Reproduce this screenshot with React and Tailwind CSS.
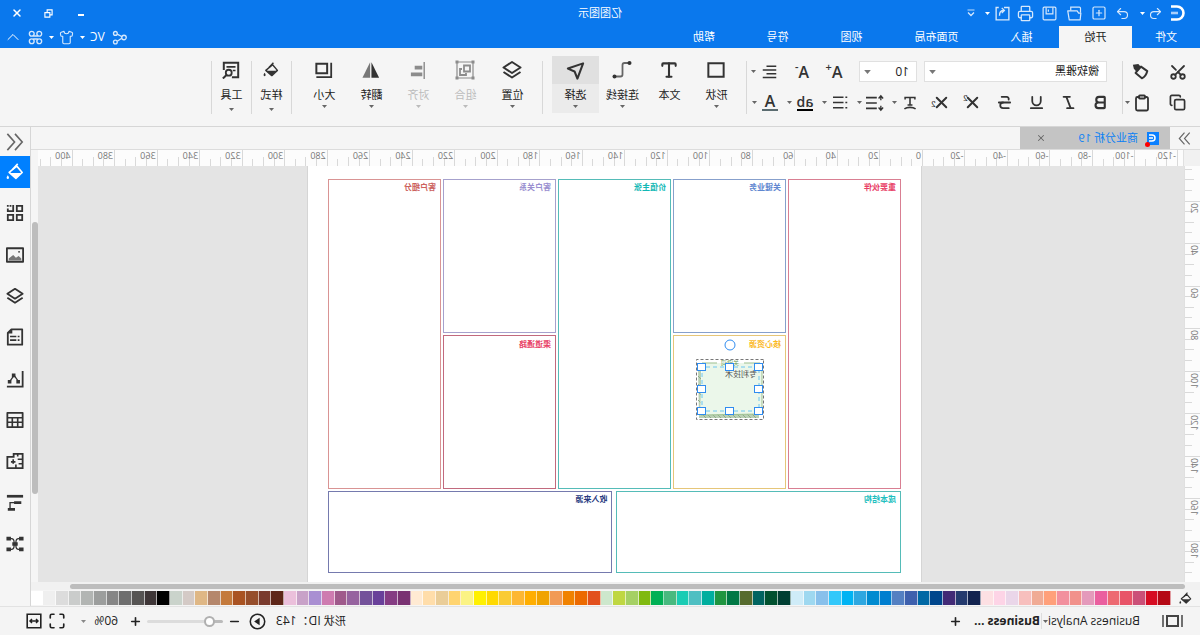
import React, { useState } from 'react';
import clsx from 'clsx';
import {
  Scissors, Copy, Clipboard, Bold, Italic, Underline, Strikethrough,
  Undo2, Redo2, SquarePlus, Printer, Shirt,
  X, Plus, Minus, ChevronUp, Maximize, Type,
} from 'lucide-react';

const PALETTE = [
  '#b50915', '#d60c22', '#cb5078', '#e85468', '#ed6a72', '#ea5f9f', '#e49abb', '#f1918b', '#f2909e', '#ffa07a',
  '#f0ab95', '#f7bfbd', '#ead6e9', '#fdd4e6', '#fde0e3', '#12234f', '#243a6e', '#422a76', '#00468c', '#0068a4',
  '#3e60ad', '#5480c2', '#007ecf', '#008bd0', '#2ea7e0', '#00b3f3', '#33c8fa', '#88c0eb', '#9ed8f0', '#cfecf8',
  '#003f33', '#00512f', '#006460', '#566b2e', '#007845', '#1f9540', '#00ae9e', '#4fbfc2', '#1accb4', '#48b97f',
  '#00b055', '#80b910', '#a5d064', '#bfd742', '#cde7cc', '#e2501d', '#ec6a00', '#f08200', '#f19a55', '#f0a300',
  '#ffae00', '#fdb733', '#facb34', '#ffd900', '#fff000', '#fbf384', '#ffd470', '#eacd98', '#ffddaa', '#ffead3',
  '#793272', '#853c83', '#69409a', '#74529a', '#96639f', '#9f5a8b', '#ce7bb0', '#a98fd2', '#c8a2c8', '#ebc0db',
  '#5e2618', '#7a3b2e', '#964e2b', '#a95322', '#c47a3c', '#b5876c', '#dfb785', '#d4cac6', '#cad3cb', '#000000',
  '#3e3637', '#565453', '#6e6e6e', '#868686', '#9c9e9d', '#b2b5b3', '#cacccb', '#dcdcdc', '#efefef', '#ffffff',
];

const H_LABELS = Array.from({ length: 27 }, (_, i) => -120 + i * 20);
const V_LABELS = Array.from({ length: 10 }, (_, i) => i * 20);

const Svg = ({ size = 20, className, children }) => (
  <svg
    width={size}
    height={size}
    viewBox="0 0 20 20"
    fill="none"
    stroke="currentColor"
    strokeWidth="1.8"
    className={clsx('shrink-0', className)}
    aria-hidden="true"
  >
    {children}
  </svg>
);

const Caret = ({ className }) => (
  <svg width="5" height="3" viewBox="0 0 5 3" className={clsx('shrink-0', className)} fill="currentColor" aria-hidden="true">
    <path d="M0 0h5L2.5 3z" />
  </svg>
);

const CaretButton = ({ label, className }) => (
  <button aria-label={label} className={clsx('flex h-5 w-2 items-center justify-center', className || 'text-[#666]')}>
    <Caret />
  </button>
);

const IconButton = ({ label, className, children }) => (
  <button aria-label={label} className={clsx('flex h-[21px] items-center justify-center', className)}>
    {children}
  </button>
);

const BucketIcon = ({ size, className }) => (
  <Svg size={size} className={className}>
    <path d="M8 3.5 2 10.5 9 17l7.5-6.5z" strokeLinejoin="round" />
    <path d="M3 11h13l-7 6z" fill="currentColor" stroke="none" />
    <path d="M7 1 12.5 7" />
    <path d="M18 13.5c1 1.6 1.3 2.2 1.3 2.9a1.3 1.3 0 0 1-2.6 0c0-.7.3-1.3 1.3-2.9z" fill="currentColor" stroke="none" />
  </Svg>
);

const LayersIcon = ({ size }) => (
  <Svg size={size}>
    <path d="M10 2 1.5 7.5 10 13l8.5-5.5z" strokeLinejoin="round" strokeWidth="2" />
    <path d="M1.500 12 10 17.500 18.500 12" strokeLinejoin="round" strokeWidth="2" />
  </Svg>
);

const DoubleChevron = ({ size, left }) => (
  <Svg size={size}>
    {left ? <path d="M10 1 2 10l8 9M18.500 1l-8 9 8 9" /> : <path d="M2 1l8 9-8 9M10 1l8 9-8 9" />}
  </Svg>
);

/* ---------- header ---------- */

const TABS = [
  { text: '开始', className: 'w-[73px]' },
  { text: '插入', className: 'w-[75px]' },
  { text: '页面布局', className: 'w-[95px]' },
  { text: '视图', className: 'w-[75px]' },
  { text: '符号', className: 'w-[73px]' },
  { text: '帮助', className: 'w-[74px]' },
];

const Header = () => {
  const [active, setActive] = useState('开始');

  return (
    <header className="flex h-12 shrink-0 flex-col bg-[#0a78ed] text-white">
      <div className="relative flex h-[26px] items-center justify-between">
        <div className="flex h-6 items-center">
          <svg width="15" height="16" viewBox="0 0 15 16" className="mr-[5px] ml-[15px]" fill="none" stroke="white" strokeWidth="2.600" aria-hidden="true">
            <path d="M14 1.500H8a6.500 6.500 0 0 0 0 13h6" />
            <path d="M7 8h7" stroke="#a9cffb" />
          </svg>
          <div className="flex items-center text-[#d6e8fc]">
            <IconButton label="撤销" className="w-[18px]"><Undo2 size={15} strokeWidth={1.8} /></IconButton>
            <CaretButton label="撤销列表" className="text-white" />
            <IconButton label="重做" className="ml-1 w-6"><Redo2 size={15} strokeWidth={1.8} /></IconButton>
            <IconButton label="新建" className="w-6"><SquarePlus size={16} strokeWidth={1.8} /></IconButton>
            <IconButton label="打开" className="w-[25px]">
              <Svg size={15}>
                <path d="M2.500 18.500h14.500l2-12H6.500l-2 3h-3z" strokeLinejoin="round" strokeWidth="1.600" />
                <path d="M2 9V3q0-1.500 1.500-1.500H15V6" strokeWidth="1.600" />
              </Svg>
            </IconButton>
            <IconButton label="保存" className="w-6">
              <Svg size={15}>
                <path d="M1.500 3q0-1.500 1.500-1.500h14q1.500 0 1.500 1.500v14q0 1.500-1.500 1.500H3q-1.500 0-1.500-1.500z" strokeWidth="1.600" />
                <path d="M5.500 2v8.500h9V2M11.500 4.500v3" strokeWidth="1.600" />
              </Svg>
            </IconButton>
            <IconButton label="打印" className="w-6"><Printer size={17} strokeWidth={1.8} /></IconButton>
            <IconButton label="导出" className="w-[22px]">
              <Svg size={15}>
                <path d="M8 2H1.500v16.500h17V2H15" />
                <path d="M14 13c0-5-1.500-7-6-7M11 2.500 7.500 6 11 9.500" />
              </Svg>
            </IconButton>
            <CaretButton label="导出选项" className="text-white" />
            <IconButton label="更多" className="ml-[5px] w-4">
              <Svg size={10}><path d="M3 4h14" /><path d="m4 9 6 6 6-6" strokeWidth="2.500" /></Svg>
            </IconButton>
          </div>
        </div>
        <h1 className="absolute left-1/2 -translate-x-1/2 text-[11px] leading-5">亿图图示</h1>
        <div className="flex h-[22px] items-center pr-[2px]">
          <IconButton label="最小化" className="w-[33px]"><span className="mt-1 h-[2px] w-[6px] bg-white" /></IconButton>
          <IconButton label="还原" className="w-[33px]">
            <Svg size={9}><path d="M2 2h11v11H2z" strokeWidth="2.500" /><path d="M7 8h11v10H7z" strokeWidth="2.500" fill="#0a78ed" /></Svg>
          </IconButton>
          <IconButton label="关闭" className="w-[30px]"><X size={12} strokeWidth={3} /></IconButton>
        </div>
      </div>

      <div className="flex h-[22px] items-end justify-between">
        <nav className="flex">
          <button className="h-[22px] w-[68px] text-[11px]">文件</button>
          {TABS.map(tab => (
            <button
              key={tab.text}
              onClick={() => setActive(tab.text)}
              className={clsx('h-[22px] text-[11px]', tab.className, active === tab.text && 'bg-[#f5f5f5] text-[#222]')}
            >
              {tab.text}
            </button>
          ))}
        </nav>
        <div className="flex h-[22px] items-center pr-[5px]">
          <IconButton label="分享" className="mr-[7px] w-4">
            <Svg size={15} className="text-[#d6e8fc]">
              <circle cx="4" cy="10" r="3" />
              <circle cx="15.500" cy="4.500" r="2.500" />
              <circle cx="15.500" cy="16" r="2.500" />
              <path d="m6.500 9 6.500-3.500M7 11l6 4" />
            </Svg>
          </IconButton>
          <button className="text-xs leading-5">VC</button>
          <CaretButton label="账户菜单" className="mr-1 ml-[3px] text-white" />
          <IconButton label="主题" className="w-4 text-[#d6e8fc]"><Shirt size={15} strokeWidth={1.8} /></IconButton>
          <CaretButton label="主题列表" className="mr-1 ml-[3px] text-white" />
          <IconButton label="应用" className="w-4">
            <Svg size={15} className="text-[#d6e8fc]">
              <circle cx="5" cy="5" r="3.200" />
              <circle cx="15" cy="5" r="3.200" />
              <circle cx="5" cy="15" r="3.200" />
              <circle cx="15" cy="15" r="3.200" />
              <path d="M7 8h6M7 12h6" />
            </Svg>
          </IconButton>
          <IconButton label="收起功能区" className="ml-[7px] w-4"><ChevronUp size={20} strokeWidth={1.200} className="shrink-0" /></IconButton>
        </div>
      </div>
    </header>
  );
};

/* ---------- ribbon ---------- */

const Divider = () => <div className="mt-[13px] h-[53px] w-px shrink-0 bg-[#d8d8d8]" />;

const BigButton = ({ text, icon, caret = true, active, disabled, lowCaret }) => (
  <button
    disabled={disabled}
    className={clsx(
      'mt-2 flex h-[57px] w-[47px] shrink-0 flex-col items-center text-[11px]',
      active && 'bg-[#ebebeb]',
      disabled ? 'text-[#bcbcbc]' : 'text-[#222]',
    )}
  >
    <span className={clsx('flex h-7 w-full items-center justify-center', active && 'bg-[#e0e0e0]', disabled ? 'text-[#8c8c8c]' : 'text-[#333]')}>
      {icon}
    </span>
    <span className="h-5 leading-[22px]">{text}</span>
    {caret && <Caret className={clsx(lowCaret ? 'mt-1' : 'mt-px', disabled ? 'text-[#bbb]' : 'text-[#666]')} />}
  </button>
);

const TextTool = ({ label, menu, children }) => (
  <div className="mr-[3px] flex items-center">
    <IconButton label={label} className="w-6">{children}</IconButton>
    <CaretButton label={menu} />
  </div>
);

const Ribbon = () => (
  <section className="flex h-[79px] shrink-0 overflow-hidden border-b border-[#d6d6d6] bg-[#f5f5f5] text-[#333]">
    <div className="flex w-[77px] shrink-0 flex-col gap-[10px] pt-[13px] pl-[11px]">
      <div className="flex gap-[15px]">
        <IconButton label="剪切" className="w-[22px]"><Scissors size={18} strokeWidth={2.400} className="-rotate-90" /></IconButton>
        <IconButton label="格式刷" className="w-[22px]">
          <Svg size={18}>
            <path d="m3 9 7-5 6 7-7 6c-3-1-5-4-6-8z" strokeLinejoin="round" strokeWidth="2.200" />
            <path d="M10 4.500 13 1l6 1-1 4-3 4z" fill="currentColor" stroke="none" />
          </Svg>
        </IconButton>
      </div>
      <div className="flex">
        <IconButton label="复制" className="mr-[15px] w-[22px]"><Copy size={17} strokeWidth={2.400} className="-scale-x-100" /></IconButton>
        <IconButton label="粘贴" className="w-[20px]"><Clipboard size={18} strokeWidth={2.400} /></IconButton>
        <CaretButton label="粘贴选项" />
      </div>
    </div>
    <Divider />

    <div className="flex w-[375px] shrink-0 flex-col gap-[10px] pt-[13px]">
      <div className="flex h-[21px] items-center pl-[15px]">
        <div className="relative mr-[7px]">
          <select aria-label="字体" className="block h-[21px] w-[183px] appearance-none border border-[#e0e0e0] bg-white pl-[7px] text-[11px] text-[#222]">
            <option>微软雅黑</option>
          </select>
          <Caret className="pointer-events-none absolute top-[9px] right-[5px] h-[4px] w-[7px] text-[#777]" />
        </div>
        <div className="relative mr-[9px]">
          <select aria-label="字号" defaultValue="10" className="block h-[21px] w-[58px] appearance-none border border-[#e0e0e0] bg-white pl-[7px] text-xs text-[#222]">
            <option>9</option>
            <option>10</option>
            <option>12</option>
          </select>
          <Caret className="pointer-events-none absolute top-[9px] right-[5px] h-[4px] w-[7px] text-[#777]" />
        </div>
        <IconButton label="增大字号" className="w-8 text-base font-semibold leading-5">A<sup className="text-[11px] leading-none">+</sup></IconButton>
        <IconButton label="减小字号" className="mr-1 w-8 text-base font-semibold leading-5">A<sup className="text-[11px] leading-none">-</sup></IconButton>
        <TextTool label="对齐方式" menu="对齐列表">
          <Svg size={15}><path d="M1 3h13M1 8h18M1 13h13M1 18h18" strokeWidth="2" /></Svg>
        </TextTool>
      </div>
      <div className="flex h-[21px] items-center pl-[6px]">
        <IconButton label="加粗" className="w-8"><Bold size={17} strokeWidth={3} /></IconButton>
        <IconButton label="斜体" className="w-8"><Italic size={17} strokeWidth={2.500} /></IconButton>
        <IconButton label="下划线" className="w-8"><Underline size={17} strokeWidth={2.500} /></IconButton>
        <IconButton label="删除线" className="w-8"><Strikethrough size={17} strokeWidth={2.500} /></IconButton>
        <IconButton label="上标" className="w-8">
          <X size={19} strokeWidth={2.500} className="-mr-[4px] shrink-0" /><sup className="font-serif text-[9px] leading-none">2</sup>
        </IconButton>
        <IconButton label="下标" className="mr-[3px] w-8">
          <X size={19} strokeWidth={2.500} className="-mr-[4px] shrink-0" /><sub className="font-serif text-[9px] leading-none">2</sub>
        </IconButton>
        <TextTool label="文字效果" menu="文字效果列表">
          <Svg size={14}><path d="M3 5V2h14v3M10 2v11M6.500 13h7M2 18.500c4-3 12-3 16 0" strokeWidth="2.200" /></Svg>
        </TextTool>
        <TextTool label="行距" menu="行距列表">
          <Svg size={18}>
            <path d="M8 4h12M8 10h12M8 16h12" />
            <path d="M3.500 2v5M3.500 13v5M1 5l2.500-3L6 5M1 15l2.500 3L6 15" strokeWidth="1.500" />
          </Svg>
        </TextTool>
        <TextTool label="项目符号" menu="项目符号列表">
          <Svg size={15}><path d="M6 3h14M6 10h14M6 17h14" strokeWidth="2" /><path d="M1 3h2.500M1 10h2.500M1 17h2.500" strokeWidth="2" /></Svg>
        </TextTool>
        <TextTool label="突出显示" menu="突出显示颜色">
          <span className="h-[17px] border-b-2 border-black text-[14px] leading-[15px] font-semibold">ab</span>
        </TextTool>
        <TextTool label="字体颜色" menu="字体颜色列表">
          <span className="h-[17px] w-4 border-b-2 border-[#5b6c70] text-center text-[16px] leading-[14px] font-semibold">A</span>
        </TextTool>
      </div>
    </div>
    <Divider />

    <div className="flex pr-[9px] pl-[6px]">
      <BigButton text="形状" icon={<Svg size={18}><path d="M1.500 2.500h17v15h-17z" strokeWidth="2.200" /></Svg>} />
      <BigButton text="文本" caret={false} icon={<Type size={20} strokeWidth={2.500} />} />
      <BigButton
        text="连接线"
        icon={
          <Svg size={20}>
            <path d="M3 3h4.500q2 0 2 2v9.500q0 2 2 2H17" stroke="#666" />
            <circle cx="2.500" cy="3" r="2" fill="currentColor" stroke="none" />
            <circle cx="17.500" cy="16.500" r="2" fill="currentColor" stroke="none" />
          </Svg>
        }
      />
      <BigButton text="选择" active icon={<Svg size={19}><path d="M2 2.500 18 8l-7 3-3 7.500z" strokeWidth="2.200" strokeLinejoin="round" /></Svg>} />
    </div>
    <Divider />

    <div className="flex pr-[9px] pl-[6px]">
      <BigButton text="位置" icon={<LayersIcon size={20} />} />
      <BigButton
        text="组合"
        disabled
        icon={
          <Svg size={20}>
            <path d="M2 2h16v16H2z" strokeWidth="1.200" />
            <path d="M5 5.500h6v6H5zM13 9h2v6H9v-2" strokeWidth="1.800" />
            <path d="M.5.5h3v3h-3zM16.500.5h3v3h-3zM.5 16.500h3v3h-3zM16.500 16.500h3v3h-3z" fill="currentColor" stroke="none" />
          </Svg>
        }
      />
      <BigButton
        text="对齐"
        disabled
        icon={<Svg size={19}><path d="M4 1v18" strokeWidth="1.500" /><path d="M6 7h8M6 14h12" strokeWidth="4" /></Svg>}
      />
      <BigButton
        text="翻转"
        icon={
          <Svg size={18}>
            <path d="M9.500 1.500V18.500H1z" fill="currentColor" stroke="none" />
            <path d="M11 1.500V18.500H19.500z" fill="#777" stroke="none" />
          </Svg>
        }
      />
      <BigButton text="大小" icon={<Svg size={18}><path d="M6.500 3h12v10.500h-12z" strokeWidth="2.200" /><path d="M2 2v16h16.500" strokeWidth="2" /></Svg>} />
    </div>
    <Divider />
    <div className="flex w-[39px] justify-center">
      <BigButton text="样式" lowCaret icon={<BucketIcon size={16} />} />
    </div>
    <Divider />
    <div className="flex w-[39px] justify-center">
      <BigButton
        text="工具"
        lowCaret
        icon={
          <Svg size={18}>
            <path d="M9 18H2V2h16v8" strokeWidth="2.200" />
            <path d="M5 6.500h10M5 10.500h3" />
            <circle cx="12.500" cy="13" r="3.300" strokeWidth="2" />
            <path d="m15 15.500 4 4" strokeWidth="2.200" />
          </Svg>
        }
      />
    </div>
    <Divider />
  </section>
);

/* ---------- rulers ---------- */

const HorizontalRuler = () => (
  <div className="flex h-4 shrink-0">
    <div className="w-4 shrink-0 bg-[#f1f1f1]" />
    <div className="flex min-w-0 flex-1 overflow-hidden border-l border-[#e0e0e0] bg-[#fcfcfc] pl-[5px]">
      <div className="flex w-[1148px] shrink-0">
        {H_LABELS.map(value => (
          <div key={value} className="relative flex flex-1 items-end border-l border-[#d9d9d9]">
            <div className="h-[7px] flex-1" />
            <div className="h-[7px] flex-1 border-l border-[#d9d9d9]" />
            <div className="h-[9px] flex-1 border-l border-[#d9d9d9]" />
            <div className="h-[7px] flex-1 border-l border-[#d9d9d9]" />
            <span className="absolute top-0 left-px text-[9px] leading-[12px] text-[#777]">{value}</span>
          </div>
        ))}
      </div>
    </div>
    <div className="w-[7px] shrink-0 bg-[#f5f5f5]" />
  </div>
);

const VerticalRuler = () => (
  <div className="h-0 min-h-full w-4 shrink-0 overflow-hidden border-r border-[#e0e0e0] bg-[#fcfcfc]">
    <div className="-mt-2 flex h-[425px] flex-col">
      {V_LABELS.map(value => (
        <div key={value} className="relative flex flex-1 flex-col items-end border-t border-[#d9d9d9]">
          <div className="w-[7px] flex-1" />
          <div className="w-[7px] flex-1 border-t border-[#d9d9d9]" />
          <div className="w-[9px] flex-1 border-t border-[#d9d9d9]" />
          <div className="w-[7px] flex-1 border-t border-[#d9d9d9]" />
          {value > 0 && (
            <span className="absolute top-px left-0 rotate-180 text-[9px] leading-[11px] text-[#777] [writing-mode:vertical-rl]">{value}</span>
          )}
        </div>
      ))}
    </div>
  </div>
);

/* ---------- canvas ---------- */

const Cell = ({ title, className, children }) => (
  <div className={clsx('relative border pt-[2px] pl-1 text-[8px] leading-[9px] font-bold', className)}>
    {title}
    {children}
  </div>
);

const HANDLES = [[5, 8], [34, 8], [62, 8], [5, 30], [62, 30], [5, 52], [34, 52], [62, 52]];

// the selected sticky note, free on the canvas
const SelectedNote = () => (
  <div className="absolute top-[23px] left-[21px] h-[61px] w-[68px] font-normal">
    <svg width="68" height="61" viewBox="0 0 68 61" className="absolute inset-0 overflow-visible" fill="none" aria-hidden="true">
      <path d="M5 55v4h60l1-49h-3v46z" fill="#b9d0b4" />
      <path d="M8 59l4-4M13 59l4-4M18 59l4-4M23 59l4-4M28 59l4-4M33 59l4-4M38 59l4-4M43 59l4-4M48 59l4-4M53 59l4-4M58 59l4-4M63 20l3-3M63 28l3-3M63 36l3-3M63 44l3-3" stroke="#8fab8a" />
      <path d="M2 4h60l2 52-62-1z" fill="#ebf7ea" />
      <path d="M4 4h16M47 4h15M2 4v51l61 1" stroke="#9dc08f" />
      <path d="M5 8h57v44H5z" stroke="#6cc6f0" strokeDasharray="4 3" />
      <path d="M.5.5h67v60H.5z" stroke="#777" strokeDasharray="3 2" />
    </svg>
    <span className="absolute top-0 left-[25px] text-[6px] leading-[8px] whitespace-nowrap text-[#6ba05a]">关键词</span>
    <span className="absolute top-[9px] left-[7px] text-[8px] leading-[11px] whitespace-nowrap text-[#555]">专利技术</span>
    <svg width="68" height="61" viewBox="0 0 68 61" className="absolute inset-0 overflow-visible" fill="white" stroke="#2f8cf0" aria-hidden="true">
      {HANDLES.map(([x, y]) => (
        <rect key={`${x}-${y}`} x={x - 3.5} y={y - 3.5} width="8" height="7" />
      ))}
      <circle cx="34" cy="-14" r="5" />
    </svg>
  </div>
);

const Page = () => (
  <div className="ml-[262px] flex w-[615px] shrink-0 flex-col gap-[2px] border-x border-[#d5d5d5] bg-white px-[20px] pt-[13px] pb-[9px]">
    <div className="grid h-[310px] grid-cols-5 grid-rows-2 gap-[2px]">
      <Cell title="重要伙伴" className="row-span-2 border-[#d97f92] text-[#e83e66]" />
      <Cell title="关键业务" className="border-[#87a0cc] text-[#5f87d0]" />
      <Cell title="价值主张" className="row-span-2 border-[#55bcb8] text-[#12b8b5]" />
      <Cell title="客户关系" className="border-[#a6a1cd] text-[#9a8fd0]" />
      <Cell title="客户细分" className="row-span-2 border-[#d99494] text-[#cc625e]" />
      <Cell title="核心资源" className="border-[#e6c679] pt-[3px] text-[#fbb91f]">
        <SelectedNote />
      </Cell>
      <Cell title="渠道通路" className="border-[#c26a7e] pt-[3px] text-[#e83e66]" />
    </div>
    <div className="grid h-[82px] grid-cols-2 gap-1">
      <Cell title="成本结构" className="border-[#55bcb8] text-[#1fbfc0]" />
      <Cell title="收入来源" className="border-[#757aae] text-[#273a80]" />
    </div>
  </div>
);

const Workspace = () => (
  <main className="flex min-w-0 flex-1 flex-col">
    <div className="flex h-[23px] shrink-0 border-b border-[#dcdcdc] bg-[#f5f5f5]">
      <button aria-label="展开左侧栏" className="flex w-[30px] items-center justify-center text-[#666]">
        <DoubleChevron size={13} />
      </button>
      <div className="flex w-[150px] items-center bg-[#c4c4c4] text-[11px] text-[#0a80f5]">
        <span className="relative ml-[11px] flex h-[13px] w-3 items-center justify-center bg-[#0a80ff]">
          <svg width="7" height="8" viewBox="0 0 7 8" fill="none" stroke="white" strokeWidth="1.500" aria-hidden="true">
            <path d="M7 1H4a3 3 0 0 0 0 6h3M3 4h4" />
          </svg>
          <span className="absolute -right-[2px] -bottom-[2px] h-[5px] w-[5px] rounded-full bg-[#f00]" />
        </span>
        <button className="ml-[9px] flex-1 text-left">商业分析 19</button>
        <button aria-label="关闭文档" className="mr-4 text-[#666]"><X size={10} strokeWidth={2.500} /></button>
      </div>
    </div>
    <HorizontalRuler />
    <div className="flex min-h-0 flex-1">
      <VerticalRuler />
      <div className="flex min-w-0 flex-1 overflow-hidden bg-[#e4e4e4]">
        <Page />
      </div>
      <div className="w-[7px] shrink-0 bg-[#f5f5f5] pt-14">
        <div className="h-[272px] w-[6px] rounded-full bg-[#bdbdbd]" />
      </div>
    </div>
    <div className="h-2 shrink-0 bg-[#f1f1f1] pt-[2px] pr-[39px] pl-[15px]">
      <div className="h-[5px] rounded-full bg-[#bdbdbd]" />
    </div>
    <div className="flex h-4 shrink-0 items-center bg-[#f5f5f5]">
      <button aria-label="填充颜色" className="flex w-[29px] justify-center text-[#333]"><BucketIcon size={13} /></button>
      <div className="flex flex-1">
        {PALETTE.map(color => (
          <button
            key={color}
            aria-label={color}
            className="h-[14px] flex-1 border-l border-white/60"
            style={{ backgroundColor: color }}
          />
        ))}
      </div>
    </div>
  </main>
);

/* ---------- right rail ---------- */

const RAIL = [
  { label: '主题样式', active: true, icon: <BucketIcon size={18} /> },
  {
    label: '符号库',
    icon: (
      <Svg size={18}>
        <path d="M2 2h6v6H2zM2 12h6v6H2zM12 12h6v6h-6z" strokeWidth="2" />
        <path d="M12 1v7h6V5" strokeWidth="2" />
        <path d="M14 2h2M18 1v2" strokeWidth="2" />
      </Svg>
    ),
  },
  {
    label: '图片',
    icon: (
      <Svg size={18}>
        <path d="M1 2.500h18v15H1z" strokeWidth="2" strokeLinejoin="round" />
        <path d="M3 16v-2l3-3 3 2 3-3 5 4v2z" fill="#777" stroke="none" />
        <circle cx="5.500" cy="6.500" r="1" fill="currentColor" stroke="none" />
      </Svg>
    ),
  },
  { label: '图层', icon: <LayersIcon size={18} /> },
  {
    label: '页面',
    icon: (
      <Svg size={18}>
        <path d="M2 1.500h12l4 4v13H2z" strokeWidth="2" strokeLinejoin="round" />
        <path d="M5 9.500h2M8.500 9.500h7M5 13.500h2M8.500 13.500h7" />
        <path d="M13 1v5h5z" fill="currentColor" stroke="none" />
      </Svg>
    ),
  },
  {
    label: '图表',
    icon: (
      <Svg size={18}>
        <path d="M1.500 1v17.500H19" strokeWidth="2" />
        <path d="m6 13 5-7 5 7" strokeWidth="1.400" />
        <path d="M4.500 11h4v4h-4zM9.500 4h4v4h-4zM14 11h4v4h-4z" fill="currentColor" stroke="none" />
      </Svg>
    ),
  },
  {
    label: '表格',
    icon: (
      <Svg size={18}>
        <path d="M1.500 2h17v16h-17z" strokeWidth="2" strokeLinejoin="round" />
        <path d="M2 7.500h16M2 12.500h16M7 8v10M13 8v10" />
      </Svg>
    ),
  },
  {
    label: '平面图',
    icon: (
      <Svg size={18}>
        <path d="M1.500 2h10v3.500h7V18h-17z" strokeWidth="2" />
        <path d="M2 8h5M7 2v3M9 18v-4M2 13h4M12 8v5M9.500 11h5" />
      </Svg>
    ),
  },
  {
    label: '时间线',
    icon: (
      <Svg size={18}>
        <path d="M1 2.500h18" strokeWidth="3" />
        <path d="M3 9.500h8M10 17h8" strokeWidth="3" />
        <path d="M10 9.500h5.500v7" strokeWidth="1.500" />
      </Svg>
    ),
  },
  {
    label: '思维导图',
    icon: (
      <Svg size={18}>
        <path d="M4 4h2q3 0 3 4v4q0 4-3 4H4M16 4h-2q-3 0-3 4v4q0 4 3 4h2" strokeWidth="1.400" />
        <path d="M.5 2h5v4h-5zM14.500 2h5v4h-5zM.5 14h5v4h-5zM14.500 14h5v4h-5zM7 8h6v4H7z" fill="currentColor" stroke="none" />
      </Svg>
    ),
  },
];

const Rail = () => (
  <aside className="flex w-[31px] shrink-0 flex-col border-l border-[#d6d6d6] bg-[#f5f5f5] text-[#333]">
    <button aria-label="收起右侧栏" className="flex h-[29px] shrink-0 items-center justify-center text-[#666]">
      <DoubleChevron size={18} left />
    </button>
    <div className="flex h-[404px] flex-col justify-between">
      {RAIL.map(({ label, active, icon }) => (
        <button
          key={label}
          aria-label={label}
          className={clsx('flex h-8 w-full items-center justify-center', active && 'bg-[#0080ff] text-white')}
        >
          {icon}
        </button>
      ))}
    </div>
  </aside>
);

/* ---------- status bar ---------- */

const StatusBar = () => {
  const [zoom, setZoom] = useState(60);

  return (
    <footer className="flex h-[29px] shrink-0 items-center justify-between border-t border-[#e2e2e2] bg-[#f4f4f4] text-xs text-[#222]">
      <div className="flex items-center">
        <IconButton label="页面预览" className="ml-4 w-[22px]">
          <svg width="21" height="12" viewBox="0 0 21 12" fill="none" stroke="#444" aria-hidden="true">
            <path d="M5 1h11v10H5z" strokeWidth="2" />
            <path d="M1 0v12M20 0v12" strokeWidth="1.500" />
          </svg>
        </IconButton>
        <button className="ml-[22px] w-[90px] text-left whitespace-nowrap">Business Analysi</button>
        <CaretButton label="页面列表" />
        <button className="border-l border-[#ddd] pl-px font-bold whitespace-nowrap">Business ...</button>
        <button aria-label="新建页面" className="ml-3"><Plus size={13} strokeWidth={3} /></button>
      </div>
      <div className="flex items-center pr-[26px]">
        <span className="mr-[10px] whitespace-nowrap"><span className="text-[11px]">形状</span> ID：143</span>
        <button aria-label="演示">
          <Svg size={17}>
            <circle cx="10" cy="10" r="8.500" />
            <path d="M7.500 5.500v9l6.500-4.500z" fill="currentColor" stroke="none" />
          </Svg>
        </button>
        <button aria-label="缩小" className="ml-[8px]"><Minus size={13} strokeWidth={3} /></button>
        <input
          type="range"
          aria-label="缩放"
          min="0"
          max="460"
          value={zoom}
          onChange={e => setZoom(Number(e.target.value))}
          className="mx-[5px] h-[3px] w-[76px] appearance-none rounded-full bg-[linear-gradient(to_right,#bbb_18%,#dcdcdc_18%)] [&::-webkit-slider-thumb]:h-[11px] [&::-webkit-slider-thumb]:w-[11px] [&::-webkit-slider-thumb]:appearance-none [&::-webkit-slider-thumb]:rounded-full [&::-webkit-slider-thumb]:border-2 [&::-webkit-slider-thumb]:border-[#b0b0b0] [&::-webkit-slider-thumb]:bg-white"
        />
        <button aria-label="放大"><Plus size={13} strokeWidth={3} /></button>
        <output className="ml-[11px] w-[27px]">{zoom}%</output>
        <CaretButton label="缩放比例" className="mr-[14px] ml-[3px] text-[#888]" />
        <button aria-label="全屏" className="mr-[6px]"><Maximize size={18} strokeWidth={2.200} /></button>
        <button aria-label="适应宽度">
          <Svg size={16}>
            <path d="M1.500 1.500h17v17h-17z" strokeWidth="2" />
            <path d="M5 10h10M7.500 7.500 5 10l2.500 2.500M12.500 7.500 15 10l-2.500 2.500" strokeWidth="1.800" />
          </Svg>
        </button>
      </div>
    </footer>
  );
};

// the whole editor is shown mirrored, left to right
export default function App() {
  return (
    <div className="flex min-h-screen w-full -scale-x-100 flex-col overflow-hidden bg-[#f5f5f5] font-['Open_Sans','Noto_Sans_CJK_SC',sans-serif]">
      <Header />
      <Ribbon />
      <div className="flex flex-1">
        <Workspace />
        <Rail />
      </div>
      <StatusBar />
    </div>
  );
}
